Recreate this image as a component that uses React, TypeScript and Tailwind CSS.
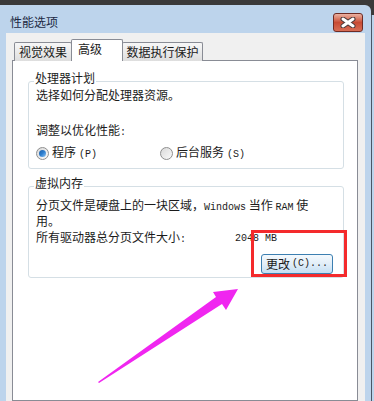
import React from 'react'

const cjk = "font-['Noto_Sans_CJK_SC','Microsoft_YaHei',sans-serif]"
const mono = "font-['Liberation_Mono',monospace] text-[10px]"

function Radio({ checked }: { checked?: boolean }) {
  return (
    <span className="w-[13px] h-[13px] rounded-full border border-[#8f8f8f] bg-linear-to-br from-[#d9d9d9] to-[#fbfbfb] flex items-center justify-center shrink-0">
      {checked && (
        <span className="w-[7px] h-[7px] rounded-full bg-linear-to-br from-[#1f5fa8] via-[#2d7fd0] to-[#8cc4f0]" />
      )}
    </span>
  )
}

function Group({ title, height, children }: { title: string; height: string; children: React.ReactNode }) {
  return (
    <div className={`relative w-[316px] ${height} border border-[#d5dfe5] rounded-[3px]`}>
      <span className="absolute left-[5px] -top-[10px] bg-white px-[1px] leading-[12px] text-[12px] text-[#1b1b1b]">
        {title}
      </span>
      {children}
    </div>
  )
}

export default function App() {
  return (
    <div className={`relative w-[374px] h-[401px] overflow-hidden bg-[#3a3a3a] pt-[5px] flex ${cjk}`}>
      {/* window */}
      <div className="w-[371px] bg-[#bdd4ec] rounded-tr-[6px] flex flex-col">
        {/* title bar */}
        <div className="h-[28px] flex items-start justify-between pl-[10px] pr-[8px] shrink-0">
          <span className="mt-[11px] text-[12px] leading-[12px] text-[#1c2a44]">性能选项</span>
          <div className="mt-[8px] w-[30px] h-[19px] rounded-[3px] border border-[#6e2b24] bg-linear-to-b from-[#eab1a2] via-[#c84b34] to-[#d86d55] flex items-center justify-center">
            <svg width="16" height="11" viewBox="0 0 16 11">
              <path d="M3 2 L13 9 M13 2 L3 9" stroke="#4a3a3a" strokeWidth="5" strokeLinecap="round" />
              <path d="M3 2 L13 9 M13 2 L3 9" stroke="#ffffff" strokeWidth="3" strokeLinecap="round" />
            </svg>
          </div>
        </div>

        {/* client area */}
        <div className="mx-[6px] flex-1 bg-[#f0f0f0] pt-[7px] pl-[6px] flex flex-col">
          {/* tabs */}
          <div className="relative z-10 flex items-end h-[21px] ml-[2px] -mb-px text-[12px] text-[#1b1b1b]">
            <div className="w-[58px] h-[19px] border border-b-0 border-[#898c95] rounded-t-[2px] bg-linear-to-b from-[#f7f7f7] to-[#dedede] flex items-center justify-center leading-[14px]">
              视觉效果
            </div>
            <div className="-ml-px w-[52px] h-[22px] border border-b-0 border-[#898c95] rounded-t-[2px] bg-white pl-[6px] pt-[2px] leading-[14px]">
              高级
            </div>
            <div className="-ml-px w-[81px] h-[19px] border border-b-0 border-[#898c95] rounded-t-[2px] bg-linear-to-b from-[#f7f7f7] to-[#dedede] flex items-center justify-center leading-[14px]">
              数据执行保护
            </div>
          </div>

          {/* panel */}
          <div className="w-[346px] flex-1 border border-[#898c95] bg-white pt-[20px] pl-[15px] text-[12px] leading-[14px] text-[#1b1b1b]">
            <Group title="处理器计划" height="h-[88px]">
              <div className="pt-[6px] pl-[7px] flex flex-col">
                <div>选择如何分配处理器资源。</div>
                <div className="mt-[21px]">调整以优化性能<span className={mono}>:</span></div>
                <div className="mt-[5px] flex items-center">
                  <div className="w-[124px] flex items-center gap-[3px]">
                    <Radio checked />
                    <span>程序<span className={`${mono} ml-[3px]`}>(P)</span></span>
                  </div>
                  <div className="flex items-center gap-[3px]">
                    <Radio />
                    <span>后台服务<span className={`${mono} ml-[3px]`}>(S)</span></span>
                  </div>
                </div>
              </div>
            </Group>

            <div className="mt-[17px]">
              <Group title="虚拟内存" height="h-[92px]">
                <div className="pt-[11px] pl-[7px] pr-[8px] flex flex-col">
                  <div className="leading-[13px]">
                    分页文件是硬盘上的一块区域，<span className={mono}>Windows</span> 当作 <span className={mono}>RAM</span> 使
                    <br />
                    用。
                  </div>
                  <div className="mt-[3px] flex items-center">
                    <span className="w-[199px]">所有驱动器总分页文件大小<span className={mono}>:</span></span>
                    <span className={mono}>2048 MB</span>
                  </div>
                  <div className="mt-[7px] flex justify-end pr-[2px]">
                    <div className="w-[72px] h-[20px] rounded-[3px] border border-[#3c7fb1] bg-linear-to-b from-[#f4f9fd] via-[#e2eef8] to-[#c4dff3] flex items-center justify-center">
                      更改<span className={`${mono} ml-[2px]`}>(C)...</span>
                    </div>
                  </div>
                </div>
              </Group>
            </div>
          </div>
        </div>
      </div>

      {/* right strip */}
      <div className="flex-1 flex flex-col">
        <div className="h-[10px]" />
        <div className="flex-1 bg-[#bdd4ec] border-l border-[#4a5666]" />
      </div>

      {/* red highlight */}
      <div className="absolute left-[251px] top-[230px] w-[96px] h-[47px] border-[3px] border-[#f42a2c]" />

      {/* arrow */}
      <svg className="absolute left-0 top-0 pointer-events-none" width="374" height="401" viewBox="0 0 374 401">
        <polygon points="98,382 216,297 213,292 238,289 226,310 222,304 99,383" fill="#f026f0" />
      </svg>
    </div>
  )
}
